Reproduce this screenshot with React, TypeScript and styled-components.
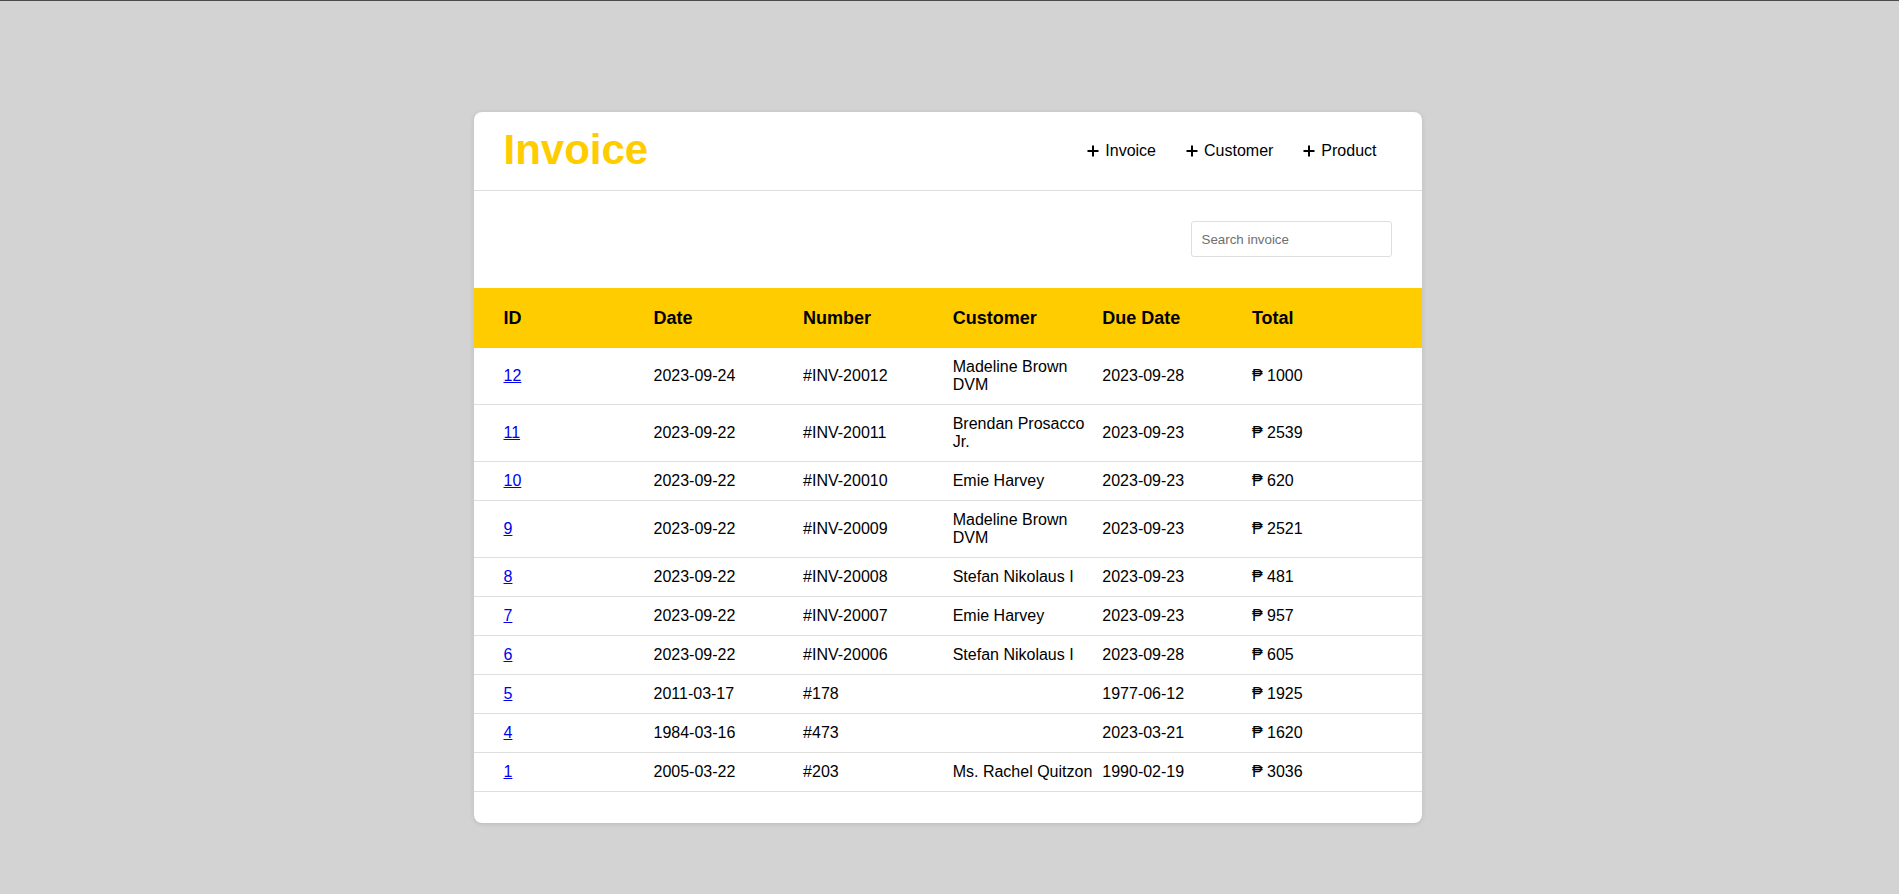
import React from "react";
import styled, { createGlobalStyle } from "styled-components";

const GlobalStyle = createGlobalStyle`
  html, body {
    margin: 0;
    padding: 0;
    background: #d3d3d3;
  }
  body {
    font-family: "Liberation Sans", Arial, sans-serif;
    font-size: 16px;
    color: #000;
  }
`;

const Page = styled.div`
  min-height: 894px;
  box-sizing: border-box;
  border-top: 1px solid #4b4b4b;
  padding: 111px 4px 40px 0;
  display: flex;
  justify-content: center;
  align-items: flex-start;
`;

const Card = styled.div`
  width: 948px;
  background: #fff;
  border-radius: 8px;
  box-shadow: 0 1px 5px rgba(0, 0, 0, 0.12);
  padding-bottom: 31px;
  overflow: hidden;
`;

const Header = styled.header`
  height: 78px;
  border-bottom: 1px solid #dedede;
  display: flex;
  align-items: center;
  justify-content: space-between;
  padding: 0 30px;
`;

const Title = styled.h1`
  margin: 0;
  font-size: 42px;
  font-weight: 700;
  color: #ffcc00;
  line-height: 48px;
  padding-bottom: 2px;
`;

const Nav = styled.nav`
  display: flex;
  align-items: center;
`;

const NavItem = styled.a`
  display: flex;
  align-items: center;
  gap: 6px;
  padding: 0 15px;
  color: #000;
  text-decoration: none;
  font-size: 16px;
  line-height: 18px;
  cursor: pointer;
`;

const SearchBar = styled.div`
  display: flex;
  justify-content: flex-end;
  padding: 30px 30px 31px;
`;

const SearchInput = styled.input`
  width: 201px;
  height: 36px;
  box-sizing: border-box;
  border: 1px solid #dedede;
  border-radius: 3px;
  padding: 0 10px;
  font-family: "Liberation Sans", Arial, sans-serif;
  font-size: 13.33px;
  color: #000;
  outline: none;
  &::placeholder {
    color: #6f6f6f;
  }
`;

const Table = styled.table`
  width: 100%;
  border-collapse: collapse;
  table-layout: fixed;
`;

const HeadRow = styled.tr`
  background: #ffcc00;
`;

const Th = styled.th`
  text-align: left;
  font-size: 18px;
  font-weight: 700;
  line-height: 20px;
  padding: 20px 4px 20px 0;
  &:first-child {
    padding-left: 30px;
  }
`;

const Row = styled.tr`
  border-bottom: 1px solid #dedede;
`;

const Td = styled.td`
  font-size: 16px;
  line-height: 18px;
  padding: 10px 4px 10px 0;
  vertical-align: middle;
  &:first-child {
    padding-left: 30px;
  }
`;

const IdLink = styled.a`
  color: #0000ee;
  text-decoration: underline;
`;

const PlusIcon = () => (
  <svg width="12" height="12" viewBox="0 0 12 12" aria-hidden="true">
    <path d="M6 0.5V11.5M0.5 6H11.5" stroke="#000" strokeWidth="2" fill="none" />
  </svg>
);

type Invoice = {
  id: number;
  date: string;
  number: string;
  customer: string;
  due: string;
  total: number;
};

const invoices: Invoice[] = [
  { id: 12, date: "2023-09-24", number: "#INV-20012", customer: "Madeline Brown DVM", due: "2023-09-28", total: 1000 },
  { id: 11, date: "2023-09-22", number: "#INV-20011", customer: "Brendan Prosacco Jr.", due: "2023-09-23", total: 2539 },
  { id: 10, date: "2023-09-22", number: "#INV-20010", customer: "Emie Harvey", due: "2023-09-23", total: 620 },
  { id: 9, date: "2023-09-22", number: "#INV-20009", customer: "Madeline Brown DVM", due: "2023-09-23", total: 2521 },
  { id: 8, date: "2023-09-22", number: "#INV-20008", customer: "Stefan Nikolaus I", due: "2023-09-23", total: 481 },
  { id: 7, date: "2023-09-22", number: "#INV-20007", customer: "Emie Harvey", due: "2023-09-23", total: 957 },
  { id: 6, date: "2023-09-22", number: "#INV-20006", customer: "Stefan Nikolaus I", due: "2023-09-28", total: 605 },
  { id: 5, date: "2011-03-17", number: "#178", customer: "", due: "1977-06-12", total: 1925 },
  { id: 4, date: "1984-03-16", number: "#473", customer: "", due: "2023-03-21", total: 1620 },
  { id: 1, date: "2005-03-22", number: "#203", customer: "Ms. Rachel Quitzon", due: "1990-02-19", total: 3036 },
];

const colWidths = [180, 149.6, 149.6, 149.6, 149.6, 169.6];
const headers = ["ID", "Date", "Number", "Customer", "Due Date", "Total"];

export default function App() {
  return (
    <>
      <GlobalStyle />
      <Page>
        <Card>
          <Header>
            <Title>Invoice</Title>
            <Nav>
              {["Invoice", "Customer", "Product"].map((label) => (
                <NavItem key={label}>
                  <PlusIcon />
                  {label}
                </NavItem>
              ))}
            </Nav>
          </Header>
          <SearchBar>
            <SearchInput placeholder="Search invoice" />
          </SearchBar>
          <Table>
            <colgroup>
              {colWidths.map((w, i) => (
                <col key={i} style={{ width: w }} />
              ))}
            </colgroup>
            <thead>
              <HeadRow>
                {headers.map((h) => (
                  <Th key={h}>{h}</Th>
                ))}
              </HeadRow>
            </thead>
            <tbody>
              {invoices.map((inv) => (
                <Row key={inv.id}>
                  <Td>
                    <IdLink href="#">{inv.id}</IdLink>
                  </Td>
                  <Td>{inv.date}</Td>
                  <Td>{inv.number}</Td>
                  <Td>{inv.customer}</Td>
                  <Td>{inv.due}</Td>
                  <Td>₱ {inv.total}</Td>
                </Row>
              ))}
            </tbody>
          </Table>
        </Card>
      </Page>
    </>
  );
}
